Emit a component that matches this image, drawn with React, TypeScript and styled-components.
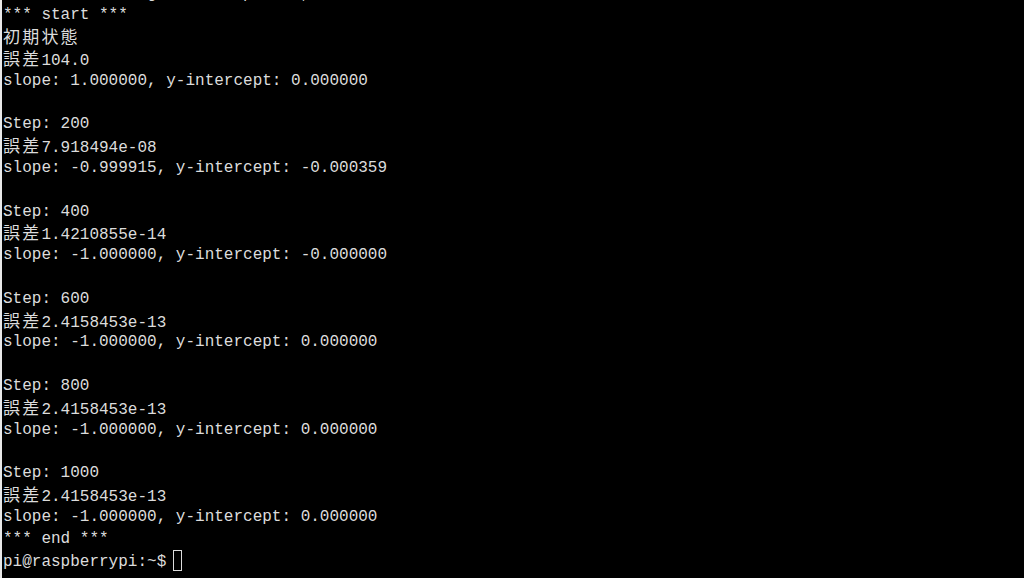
import React from "react";
import styled, { createGlobalStyle } from "styled-components";

const Global = createGlobalStyle`
  html, body { margin: 0; padding: 0; background: #000; overflow: hidden; }
  #root { width: 1024px; height: 578px; }
`;

const Screen = styled.div`
  width: 1024px;
  height: 578px;
  background: #000;
  overflow: hidden;
  display: flex;
`;

const Edge = styled.div`
  width: 2px;
  flex: none;
  background: #e8e8e8;
`;

const Console = styled.pre`
  margin: -16.4px 0 0 1px;
  padding: 0;
  font-family: "Liberation Mono", "Noto Sans CJK JP", monospace;
  font-size: 16px;
  line-height: 21.8px;
  color: #dcdcdc;
  white-space: pre;
`;

const Line = styled.div`
  display: block;
  height: 21.8px;
  line-height: 21.8px;
`;

const Cjk = styled.span`
  font-family: "Noto Sans CJK JP", sans-serif;
  font-size: 17px;
  line-height: 1;
  letter-spacing: 2.2px;
`;

const Cursor = styled.span`
  display: inline-block;
  width: 9px;
  height: 21px;
  border: 1px solid #dcdcdc;
  box-sizing: border-box;
  margin-left: 7px;
  vertical-align: -5px;
`;

type Row = { jp?: string; text: string };

const rows: Row[] = [
  { text: "*** start ***" },
  { jp: "初期状態", text: "" },
  { jp: "誤差", text: "104.0" },
  { text: "slope: 1.000000, y-intercept: 0.000000" },
  { text: "" },
  { text: "Step: 200" },
  { jp: "誤差", text: "7.918494e-08" },
  { text: "slope: -0.999915, y-intercept: -0.000359" },
  { text: "" },
  { text: "Step: 400" },
  { jp: "誤差", text: "1.4210855e-14" },
  { text: "slope: -1.000000, y-intercept: -0.000000" },
  { text: "" },
  { text: "Step: 600" },
  { jp: "誤差", text: "2.4158453e-13" },
  { text: "slope: -1.000000, y-intercept: 0.000000" },
  { text: "" },
  { text: "Step: 800" },
  { jp: "誤差", text: "2.4158453e-13" },
  { text: "slope: -1.000000, y-intercept: 0.000000" },
  { text: "" },
  { text: "Step: 1000" },
  { jp: "誤差", text: "2.4158453e-13" },
  { text: "slope: -1.000000, y-intercept: 0.000000" },
  { text: "*** end ***" },
];

export default function App() {
  return (
    <>
      <Global />
      <Screen>
        <Edge />
        <Console>
          <Line>{"               g         p     ,"}</Line>
          {rows.map((r, i) => (
            <Line key={i}>
              {r.jp && <Cjk>{r.jp}</Cjk>}
              {r.text}
            </Line>
          ))}
          <Line>
            pi@raspberrypi:~$<Cursor />
          </Line>
        </Console>
      </Screen>
    </>
  );
}
